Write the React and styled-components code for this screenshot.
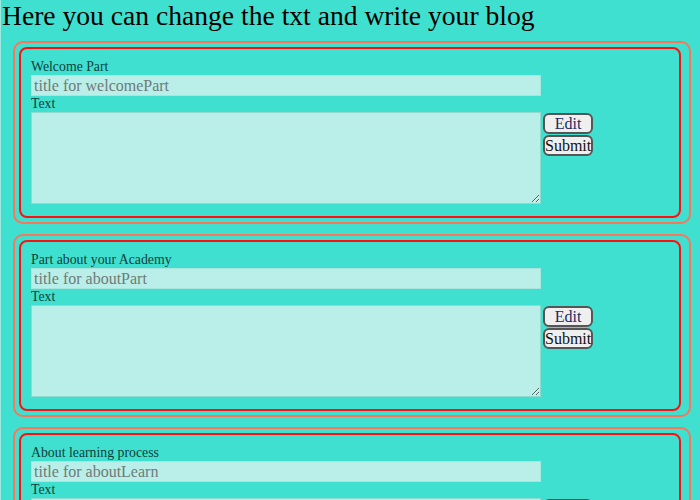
import styled, { createGlobalStyle } from "styled-components"

const Global = createGlobalStyle`
body {
  margin: 0;
  background-color: #40e0d0;
  font-family: "Liberation Serif", "DejaVu Serif", serif;
}
`

const Page = styled.div`
  padding: 0 9px 20px 12px;
  border-left: 1px solid #9ee9df;
`

const Heading = styled.h1`
  margin: 0 0 9px -11px;
  font-size: 27.6px;
  font-weight: normal;
  line-height: 32px;
  color: #000;
`

const Outer = styled.div`
  border: 2px solid #f8775a;
  border-radius: 10px;
  padding: 4px 8px 4px 4px;
  margin-bottom: 10px;
`

const Inner = styled.div`
  border: 2px solid #ff1010;
  border-radius: 8px;
  padding: 10px 10px 12px 10px;
`

const Label = styled.div`
  font-size: 13.8px;
  line-height: 16px;
  color: #10403a;
`

const Row = styled.div`
  display: flex;
  gap: 2px;
`

const Fields = styled.div`
  width: 510px;
  display: flex;
  flex-direction: column;
`

const TitleInput = styled.input`
  box-sizing: border-box;
  width: 510px;
  height: 21px;
  border: 1px solid #a6e6de;
  background-color: #b9efe8;
  font-family: inherit;
  font-size: 16px;
  padding: 0 2px;
  outline: none;
  &::placeholder {
    color: #707a78;
  }
`

const TextArea = styled.textarea`
  box-sizing: border-box;
  width: 510px;
  height: 92px;
  border: 1px solid #8fd9cf;
  background-color: #b9efe8;
  font-family: inherit;
  display: block;
`

const Buttons = styled.div`
  display: flex;
  flex-direction: column;
  gap: 1px;
  padding-top: 54px;
`

const Button = styled.button`
  width: 50px;
  height: 21px;
  padding: 0;
  border: 2px solid #555;
  border-radius: 6px;
  background-color: #efefef;
  font-family: inherit;
  font-size: 16px;
  color: ${(p) => (p.dark ? "#111" : "#1a2a66")};
  line-height: 16px;
`

const sections = [
  { label: "Welcome Part", placeholder: "title for welcomePart" },
  { label: "Part about your Academy", placeholder: "title for aboutPart" },
  { label: "About learning process", placeholder: "title for aboutLearn" },
]

export default function App() {
  return (
    <>
      <Global />
      <Page>
        <Heading>Here you can change the txt and write your blog</Heading>
        {sections.map((s) => (
          <Outer key={s.label}>
            <Inner>
              <Row>
                <Fields>
                  <Label>{s.label}</Label>
                  <TitleInput placeholder={s.placeholder} />
                  <Label>Text</Label>
                  <TextArea />
                </Fields>
                <Buttons>
                  <Button>Edit</Button>
                  <Button dark>Submit</Button>
                </Buttons>
              </Row>
            </Inner>
          </Outer>
        ))}
      </Page>
    </>
  )
}
